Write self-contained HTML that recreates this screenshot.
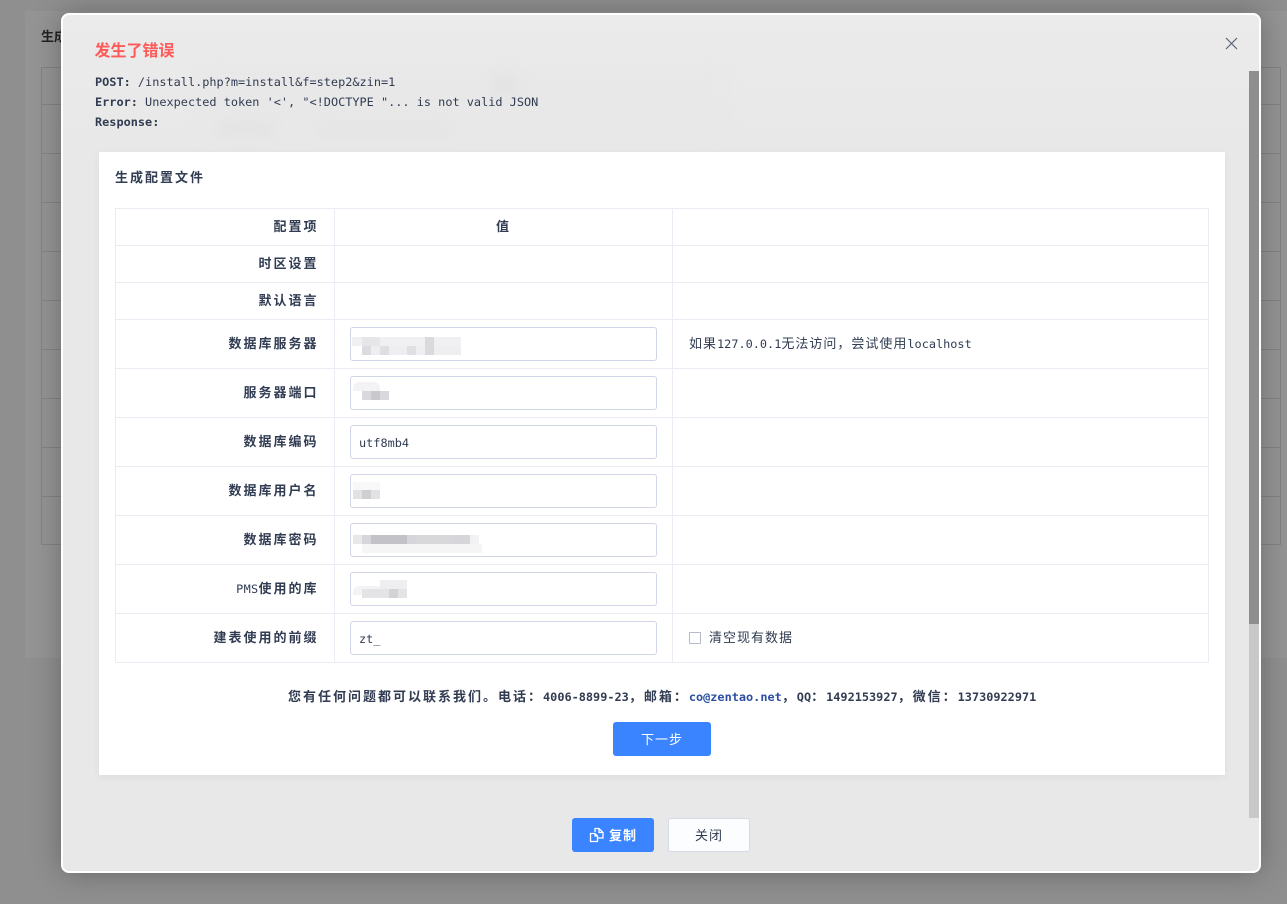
<!DOCTYPE html>
<html><head><meta charset="utf-8">
<style>
html,body{margin:0;padding:0;width:1287px;height:904px;overflow:hidden;background:#8f8f8f}
*{box-sizing:border-box}
body{position:relative;font-family:"WenQuanYi Zen Hei","Noto Sans CJK SC",sans-serif;font-size:13px;letter-spacing:1px;color:#313c52}
.a{position:absolute}
.hl{position:absolute;height:1px}
.vl{position:absolute;width:1px}
.inp{position:absolute;left:350px;width:307px;height:34px;border:1px solid #d0d5e8;border-radius:3px;background:#fff;padding-left:8px;line-height:34px;overflow:hidden}
.bl{position:absolute}
.t{position:absolute;white-space:nowrap;line-height:20px}
.m{font-family:"DejaVu Sans Mono","Liberation Mono",monospace;font-size:11.88px;letter-spacing:0}
.b{font-weight:bold;letter-spacing:2px}
.lb{position:absolute;left:115px;width:203.500px;text-align:right;white-space:nowrap;line-height:20px;font-weight:bold;letter-spacing:2px}
.bg{background:#838383;left:41px;width:21px}
.bg2{background:#838383;left:1261px;width:20px}
.r{background:#ebecf3;left:115px;width:1094px}
</style></head><body>
<!-- background page -->
<div class="a" style="left:25px;top:11px;width:1262px;height:647px;background:#949494"></div>
<div class="a" style="left:41px;top:28px;font-size:13px;font-weight:bold;color:#222;line-height:15px;letter-spacing:0">生成</div>
<div class="a" style="left:41px;top:67px;width:1240px;height:478px;border:1px solid #838383"></div>
<div class="hl bg" style="top:104px"></div><div class="hl bg" style="top:153px"></div><div class="hl bg" style="top:202px"></div>
<div class="hl bg" style="top:251px"></div><div class="hl bg" style="top:300px"></div><div class="hl bg" style="top:349px"></div>
<div class="hl bg" style="top:398px"></div><div class="hl bg" style="top:447px"></div><div class="hl bg" style="top:496px"></div>
<div class="hl bg2" style="top:104px"></div><div class="hl bg2" style="top:153px"></div><div class="hl bg2" style="top:202px"></div>
<div class="hl bg2" style="top:251px"></div><div class="hl bg2" style="top:300px"></div><div class="hl bg2" style="top:349px"></div>
<div class="hl bg2" style="top:398px"></div><div class="hl bg2" style="top:447px"></div><div class="hl bg2" style="top:496px"></div>

<!-- modal -->
<div class="a" style="left:61px;top:13px;width:1200px;height:860px;background:linear-gradient(#ebebeb,#e8e8e8 140px);border:2px solid #fff;border-radius:8px;box-shadow:0 0 30px rgba(0,0,0,.28);overflow:hidden">
  <div class="a" style="left:140px;top:55px;width:520px;height:80px;background:#e8e8e8;filter:blur(8px)"></div>
  <div class="a" style="left:430px;top:62px;width:24px;height:18px;background:#e3e3e3;filter:blur(6px)"></div>
  <div class="a" style="left:155px;top:108px;width:55px;height:14px;background:#e3e3e3;filter:blur(6px)"></div>
  <div class="a" style="left:255px;top:108px;width:130px;height:14px;background:#e5e5e5;filter:blur(6px)"></div>
</div>
<div class="a" style="left:1249px;top:71px;width:10px;height:747px;background:#c8c8c8"></div>
<div class="a" style="left:1249px;top:71px;width:10px;height:553px;background:#8e8e8e"></div>

<svg class="a" style="left:1225px;top:37px" width="13" height="13" viewBox="0 0 13 13"><path d="M1 1L12 12M12 1L1 12" stroke="#5a6275" stroke-width="1.200" fill="none"/></svg>

<div class="t" style="left:94.500px;top:39px;font-size:16px;font-weight:bold;color:#ff5a5a;letter-spacing:0">发生了错误</div>
<div class="t m" style="left:95px;top:72px"><b>POST:</b> /install.php?m=install&amp;f=step2&amp;zin=1</div>
<div class="t m" style="left:95px;top:92px"><b>Error:</b> Unexpected token '&lt;', "&lt;!DOCTYPE "... is not valid JSON</div>
<div class="t m" style="left:95px;top:112px"><b>Response:</b></div>

<!-- white panel -->
<div class="a" style="left:99px;top:152px;width:1126px;height:623px;background:#fff;box-shadow:0 2px 8px rgba(0,0,0,.05)"></div>
<div class="t b" style="left:115px;top:167px">生成配置文件</div>

<!-- table -->
<div class="a" style="left:115px;top:208px;width:1094px;height:455px;border:1px solid #ebecf3"></div>
<div class="vl" style="left:334px;top:208px;height:455px;background:#ebecf3"></div>
<div class="vl" style="left:672px;top:208px;height:455px;background:#ebecf3"></div>
<div class="hl r" style="top:245px"></div><div class="hl r" style="top:282px"></div><div class="hl r" style="top:319px"></div>
<div class="hl r" style="top:368px"></div><div class="hl r" style="top:417px"></div><div class="hl r" style="top:466px"></div>
<div class="hl r" style="top:515px"></div><div class="hl r" style="top:564px"></div><div class="hl r" style="top:613px"></div>

<div class="lb" style="top:216px">配置项</div>
<div class="t b" style="left:335px;width:337px;top:216px;text-align:center">值</div>
<div class="lb" style="top:253px">时区设置</div>
<div class="lb" style="top:290px">默认语言</div>
<div class="lb" style="top:333px">数据库服务器</div>
<div class="lb" style="top:382px">服务器端口</div>
<div class="lb" style="top:431px">数据库编码</div>
<div class="lb" style="top:480px">数据库用户名</div>
<div class="lb" style="top:529px">数据库密码</div>
<div class="lb" style="top:578px"><span class="m" style="font-weight:normal;letter-spacing:.3px">PMS</span>使用的库</div>
<div class="lb" style="top:627px">建表使用的前缀</div>

<div class="inp" style="top:327px"></div>
<div class="inp" style="top:376px"></div>
<div class="inp m" style="top:425px">utf8mb4</div>
<div class="inp" style="top:474px"></div>
<div class="inp" style="top:523px"></div>
<div class="inp" style="top:572px"></div>
<div class="inp m" style="top:621px">zt_</div>

<!-- blurred values -->
<div class="bl" style="left:352px;top:337px;width:109px;height:9px;background:#f0f0f2"></div>
<div class="bl" style="left:362px;top:346px;width:99px;height:9px;background:#eeeef0"></div>
<div class="bl" style="left:362px;top:337px;width:18px;height:9px;background:#e6e6e8"></div>
<div class="bl" style="left:362px;top:346px;width:9px;height:9px;background:#dcdce0"></div>
<div class="bl" style="left:380px;top:346px;width:9px;height:9px;background:#dfdfe3"></div>
<div class="bl" style="left:407px;top:346px;width:9px;height:9px;background:#e0e0e4"></div>
<div class="bl" style="left:425px;top:337px;width:9px;height:18px;background:#d9d9de"></div>

<div class="bl" style="left:353px;top:382px;width:27px;height:9px;background:#f3f3f5;border-radius:6px 6px 0 0"></div>
<div class="bl" style="left:362px;top:391px;width:27px;height:9px;background:#d9d9dd"></div>
<div class="bl" style="left:371px;top:391px;width:9px;height:9px;background:#c8c8cd"></div>

<div class="bl" style="left:353px;top:482px;width:27px;height:8px;background:#f8f8f9"></div>
<div class="bl" style="left:353px;top:490px;width:27px;height:9px;background:#e2e2e5"></div>
<div class="bl" style="left:362px;top:490px;width:9px;height:9px;background:#cfcfd3"></div>

<div class="bl" style="left:353px;top:535px;width:126px;height:9px;background:#d6d6da"></div>
<div class="bl" style="left:353px;top:535px;width:9px;height:9px;background:#e8e8ea"></div>
<div class="bl" style="left:371px;top:535px;width:36px;height:9px;background:#c2c2c8"></div>
<div class="bl" style="left:416px;top:535px;width:36px;height:9px;background:#d8d8db"></div>
<div class="bl" style="left:470px;top:535px;width:9px;height:9px;background:#f2f2f4"></div>
<div class="bl" style="left:362px;top:544px;width:120px;height:9px;background:#f5f5f6"></div>

<div class="bl" style="left:353px;top:586px;width:27px;height:9px;background:#f3f3f5;border-radius:6px 0 0 0"></div>
<div class="bl" style="left:380px;top:580px;width:27px;height:15px;background:#eeeef0"></div>
<div class="bl" style="left:362px;top:589px;width:45px;height:9px;background:#e4e4e7"></div>
<div class="bl" style="left:389px;top:589px;width:9px;height:9px;background:#d2d2d7"></div>

<div class="t" style="left:689px;top:333px">如果<span class="m">127.0.0.1</span>无法访问，尝试使用<span class="m">localhost</span></div>
<div class="a" style="left:689px;top:632px;width:12px;height:12px;border:1px solid #b5bac8;border-radius:1px;background:#fff"></div>
<div class="t" style="left:709px;top:627px">清空现有数据</div>

<div class="t b" style="left:288px;top:686px">您有任何问题都可以联系我们。电话：<span class="m">4006-8899-23</span>，邮箱：<span class="m" style="color:#2c4fa3">co@zentao.net</span>，<span class="m">QQ</span>：<span class="m">1492153927</span>，微信：<span class="m">13730922971</span></div>

<div class="a" style="left:613px;top:722px;width:98px;height:34px;background:#3a85ff;border-radius:3px;color:#fff;text-align:center;line-height:34px">下一步</div>

<div class="a" style="left:572px;top:818px;width:82px;height:34px;background:#3a85ff;border-radius:3px"></div>
<svg class="a" style="left:589px;top:827px" width="16" height="16" viewBox="0 0 16 16"><path d="M1.500 6.500h4.500l2.500 2.500v5.500h-7zM6 6.500v2.500h2.500M6 5V1.500h4l4 4v5.500h-5.500M10 1.500v4h4" fill="none" stroke="#fff" stroke-width="1.300"/></svg>
<div class="t" style="left:609px;top:825px;color:#fff;font-weight:bold">复制</div>
<div class="a" style="left:668px;top:818px;width:82px;height:34px;background:#fcfdff;border:1px solid #d5d9e8;border-radius:3px;text-align:center;line-height:32px;color:#313c52">关闭</div>
</body></html>
